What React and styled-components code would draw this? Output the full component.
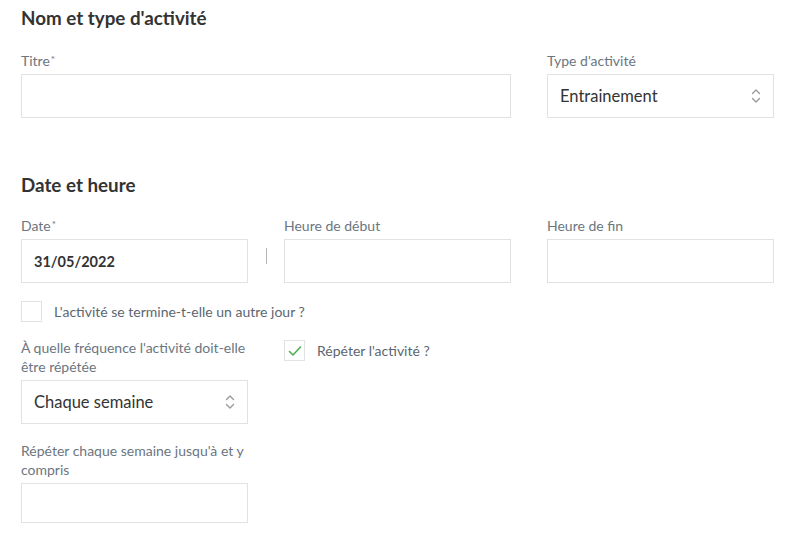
import React from 'react';
import styled, { createGlobalStyle } from 'styled-components';

const GlobalStyle = createGlobalStyle`
body {
  margin: 0;
  background: #ffffff;
  font-family: 'Lato', 'Noto Sans', sans-serif;
  color: #333333;
}
`;

const Page = styled.div`
padding: 6px 25px 0 21px;
width: 754px;
`;

const Section = styled.section`
margin-bottom: ${props => props.$gap || '0'};
`;

const Heading = styled.h2`
margin: 0 0 ${props => props.$gap || '21px'} 0;
font-size: 18.8px;
line-height: 24px;
font-weight: 700;
color: #333333;
`;

const Grid = styled.div`
display: grid;
grid-template-columns: 227px 227px 227px;
column-gap: 36px;
align-items: start;
`;

const Field = styled.div`
position: relative;
display: flex;
flex-direction: column;
grid-column: ${props => props.$span ? `span ${props.$span}` : 'auto'};
margin-top: ${props => props.$top || '0'};
`;

const Label = styled.label`
display: block;
font-size: 14px;
line-height: 19px;
height: ${props => props.$lines ? `${props.$lines * 19}px` : 'auto'};
color: #6b7680;
margin-bottom: 4px;
`;

const Star = styled.span`
position: relative;
top: -3px;
font-size: 10px;
line-height: 0;
margin-left: 1px;
`;

const Input = styled.div`
box-sizing: border-box;
height: ${props => props.$height || '44px'};
border: 1px solid #e2e2e2;
background: #ffffff;
display: flex;
align-items: center;
justify-content: space-between;
padding: 0 12px;
font-size: ${props => props.$size || '15px'};
font-weight: ${props => props.$weight || 400};
color: #333333;
`;

const Separator = styled.span`
position: absolute;
right: -19px;
top: 32px;
width: 1px;
height: 16px;
background: #b5b5b5;
`;

const CheckRow = styled.div`
display: flex;
align-items: center;
gap: 12px;
grid-column: ${props => props.$span ? `span ${props.$span}` : 'auto'};
margin-top: ${props => props.$top || '0'};
font-size: 14px;
line-height: 19px;
color: #5b6670;
`;

const Box = styled.span`
box-sizing: border-box;
width: 21px;
height: 21px;
border: 1px solid #e2e2e2;
background: #ffffff;
display: flex;
align-items: center;
justify-content: center;
flex-shrink: 0;
`;

function Chevrons() {
  return (
    <svg width="10" height="16" viewBox="0 0 10 16" fill="none" stroke="#9a9a9a" strokeWidth="1.4" strokeLinecap="round" strokeLinejoin="round">
      <path d="M1.5 5.5 L5 2 L8.5 5.5" />
      <path d="M1.5 10.5 L5 14 L8.5 10.5" />
    </svg>
  );
}

function Check() {
  return (
    <svg width="14" height="12" viewBox="0 0 14 12" fill="none" stroke="#4caf50" strokeWidth="1.6" strokeLinecap="round" strokeLinejoin="round">
      <path d="M1.5 6.5 L5 10 L12.5 2" />
    </svg>
  );
}

export default function App() {
  return (
    <Page>
      <GlobalStyle />

      <Section $gap="55px">
        <Heading>Nom et type d'activité</Heading>
        <Grid>
          <Field $span={2}>
            <Label $lines={1}>Titre<Star>*</Star></Label>
            <Input />
          </Field>
          <Field>
            <Label $lines={1}>Type d'activité</Label>
            <Input $size="16.5px">
              Entrainement
              <Chevrons />
            </Input>
          </Field>
        </Grid>
      </Section>

      <Section>
        <Heading $gap="19px">Date et heure</Heading>
        <Grid>
          <Field>
            <Label $lines={1}>Date<Star>*</Star></Label>
            <Input $size="14.5px" $weight={700}>31/05/2022</Input>
            <Separator />
          </Field>
          <Field>
            <Label $lines={1}>Heure de début</Label>
            <Input />
          </Field>
          <Field>
            <Label $lines={1}>Heure de fin</Label>
            <Input />
          </Field>

          <CheckRow $span={3} $top="18px">
            <Box />
            L'activité se termine-t-elle un autre jour ?
          </CheckRow>

          <Field $top="16px">
            <Label $lines={2}>À quelle fréquence l'activité doit-elle être répétée</Label>
            <Input $size="16.5px">
              Chaque semaine
              <Chevrons />
            </Input>
            <Field $top="17px">
              <Label $lines={2}>Répéter chaque semaine jusqu'à et y compris</Label>
              <Input $height="40px" />
            </Field>
          </Field>
          <CheckRow $top="18px">
            <Box><Check /></Box>
            Répéter l'activité ?
          </CheckRow>
        </Grid>
      </Section>
    </Page>
  );
}
